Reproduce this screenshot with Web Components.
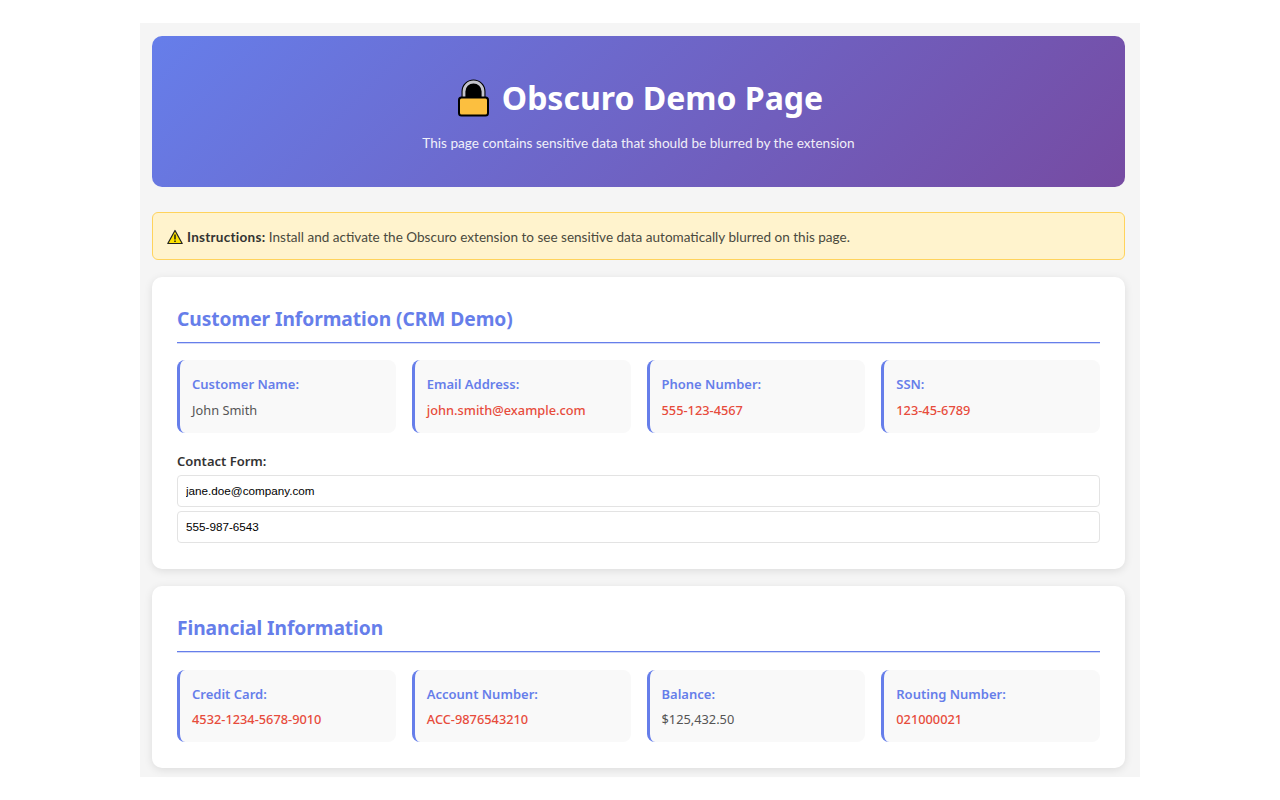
<!DOCTYPE html>
<html lang="en">
<head>
<meta charset="utf-8">
<title>Obscuro Demo Page</title>
<style>
    html, body { margin: 0; background: #fff; }
    body {
        padding: 23px 140px;
        font-family: "Noto Sans", "Open Sans", sans-serif;
        color: #333;
    }
</style>
</head>
<body>
<demo-page>
    <demo-header heading="Obscuro Demo Page" sub="This page contains sensitive data that should be blurred by the extension"></demo-header>
    <demo-notice><b>Instructions:</b> Install and activate the Obscuro extension to see sensitive data automatically blurred on this page.</demo-notice>
    <demo-section heading="Customer Information (CRM Demo)">
        <info-item label="Customer Name:" value="John Smith"></info-item>
        <info-item label="Email Address:" value="john.smith@example.com" sensitive></info-item>
        <info-item label="Phone Number:" value="555-123-4567" sensitive></info-item>
        <info-item label="SSN:" value="123-45-6789" sensitive></info-item>
        <contact-form slot="extra"></contact-form>
    </demo-section>
    <demo-section heading="Financial Information">
        <info-item label="Credit Card:" value="4532-1234-5678-9010" sensitive></info-item>
        <info-item label="Account Number:" value="ACC-9876543210" sensitive></info-item>
        <info-item label="Balance:" value="$125,432.50"></info-item>
        <info-item label="Routing Number:" value="021000021" sensitive></info-item>
    </demo-section>
</demo-page>

<script>
class DemoPage extends HTMLElement {
    constructor() {
        super();
        this.attachShadow({ mode: 'open' });
        this.shadowRoot.innerHTML = `
            <style>
                :host {
                    display: block;
                    height: 754px;
                    box-sizing: border-box;
                    padding: 13px 15px 9px 12px;
                    background: #f5f5f5;
                }
            </style>
            <slot></slot>
        `;
    }
}

class DemoHeader extends HTMLElement {
    constructor() {
        super();
        this.attachShadow({ mode: 'open' });
    }

    connectedCallback() {
        this.shadowRoot.innerHTML = `
            <style>
                :host {
                    display: block;
                    height: 151px;
                    box-sizing: border-box;
                    margin-bottom: 25px;
                    padding-top: 42px;
                    border-radius: 10px;
                    background: linear-gradient(135deg, #667eea 0%, #764ba2 100%);
                    color: #fff;
                    text-align: center;
                }
                h1 {
                    display: flex;
                    justify-content: center;
                    align-items: center;
                    gap: 12px;
                    height: 40px;
                    margin: 0 0 15px;
                    padding-left: 4px;
                    font-size: 32px;
                    font-weight: 700;
                    line-height: 40px;
                }
                svg { display: block; flex: none; }
                p {
                    margin: 0;
                    font-family: Lato, "Noto Sans", sans-serif;
                    font-size: 13.600px;
                    line-height: 20px;
                    opacity: .9;
                }
            </style>
            <h1>
                <svg width="32" height="40" viewBox="0 0 32 40">
                    <path d="M6 21V13.500a9.500 9.500 0 0 1 19 0V21Z" fill="#000" stroke="#000" stroke-width="5"/>
                    <path d="M6 20V13.500a9.500 9.500 0 0 1 19 0V20" fill="none" stroke="#c4c4cc" stroke-width="2.800"/>
                    <rect x="1" y="19.500" width="29" height="18" rx="2.500" fill="#fcbf3f" stroke="#000" stroke-width="2"/>
                </svg>
                <span>${this.getAttribute('heading')}</span>
            </h1>
            <p>${this.getAttribute('sub')}</p>
        `;
    }
}

class DemoNotice extends HTMLElement {
    constructor() {
        super();
        this.attachShadow({ mode: 'open' });
        this.shadowRoot.innerHTML = `
            <style>
                :host {
                    display: flex;
                    align-items: center;
                    gap: 4px;
                    height: 48px;
                    box-sizing: border-box;
                    margin-bottom: 16.600px;
                    padding: 1px 14px 0;
                    border: 1px solid #ffd35c;
                    border-radius: 6px;
                    background: #fff3cd;
                    color: #4a4a3e;
                    font-family: Lato, "Noto Sans", sans-serif;
                    font-size: 13.550px;
                }
                svg { flex: none; }
                ::slotted(b) { color: #333; letter-spacing: .25px; }
                span { white-space: pre-wrap; }
            </style>
            <svg width="16" height="16" viewBox="0 0 16 16">
                <path d="M8 1.500 15.200 14.500H.8Z" fill="#fce100" stroke="#222" stroke-width="1.200" stroke-linejoin="round"/>
                <path d="M8 5.500v5M8 11.500v1.500" stroke="#111" stroke-width="1.400"/>
            </svg>
            <span><slot></slot></span>
        `;
    }
}

class DemoSection extends HTMLElement {
    constructor() {
        super();
        this.attachShadow({ mode: 'open' });
    }

    connectedCallback() {
        this.shadowRoot.innerHTML = `
            <style>
                :host {
                    display: block;
                    box-sizing: border-box;
                    margin-bottom: 17.600px;
                    padding: 25px 25px 25.600px;
                    border-radius: 10px;
                    background: #fff;
                    box-shadow: 0 2px 8px rgba(0, 0, 0, .1);
                }
                :host(:last-child) { margin-bottom: 0; }
                h2 {
                    height: 41px;
                    box-sizing: border-box;
                    margin: 0 0 17.600px;
                    border-bottom: 1px solid #667eea;
                    box-shadow: 0 1px 0 rgba(102, 126, 234, .3);
                    color: #667eea;
                    font-size: 19.200px;
                    font-weight: 700;
                    letter-spacing: -.05px;
                    line-height: 34px;
                }
                .grid {
                    display: grid;
                    grid-template-columns: repeat(4, 1fr);
                    gap: 16px;
                }
            </style>
            <h2>${this.getAttribute('heading')}</h2>
            <div class="grid"><slot></slot></div>
            <slot name="extra"></slot>
        `;
    }
}

class InfoItem extends HTMLElement {
    constructor() {
        super();
        this.attachShadow({ mode: 'open' });
    }

    connectedCallback() {
        const sensitive = this.hasAttribute('sensitive');
        this.shadowRoot.innerHTML = `
            <style>
                :host {
                    display: block;
                    height: 72.400px;
                    box-sizing: border-box;
                    padding: 14px 12px;
                    border-left: 3px solid #667eea;
                    border-radius: 8px;
                    background: #f9f9f9;
                }
                .label {
                    margin-bottom: 5.400px;
                    color: #667eea;
                    font-size: 13px;
                    font-weight: 600;
                    line-height: 20px;
                }
                .value {
                    color: ${sensitive ? '#e74c3c' : '#555'};
                    font-size: 12.800px;
                    font-weight: ${sensitive ? 500 : 400};
                    line-height: 20px;
                }
            </style>
            <div class="label">${this.getAttribute('label')}</div>
            <div class="value">${this.getAttribute('value')}</div>
        `;
    }
}

class ContactForm extends HTMLElement {
    constructor() {
        super();
        this.attachShadow({ mode: 'open' });
        this.shadowRoot.innerHTML = `
            <style>
                :host { display: block; margin-top: 18.600px; }
                label {
                    display: block;
                    margin-bottom: 4px;
                    color: #333;
                    font-size: 13px;
                    font-weight: 600;
                    line-height: 20px;
                }
                input {
                    display: block;
                    width: 100%;
                    height: 32px;
                    box-sizing: border-box;
                    margin-bottom: 4px;
                    padding: 0 8px 2px;
                    border: 1px solid #e3e3e3;
                    border-radius: 4px;
                    background: #fff;
                    color: #000;
                    font-family: "Liberation Sans", Arial, sans-serif;
                    font-size: 11.700px;
                }
                input:last-child { margin-bottom: 0; }
            </style>
            <label>Contact Form:</label>
            <input type="email" value="jane.doe@company.com">
            <input type="tel" value="555-987-6543">
        `;
    }
}

customElements.define('demo-page', DemoPage);
customElements.define('demo-header', DemoHeader);
customElements.define('demo-notice', DemoNotice);
customElements.define('demo-section', DemoSection);
customElements.define('info-item', InfoItem);
customElements.define('contact-form', ContactForm);
</script>
</body>
</html>
